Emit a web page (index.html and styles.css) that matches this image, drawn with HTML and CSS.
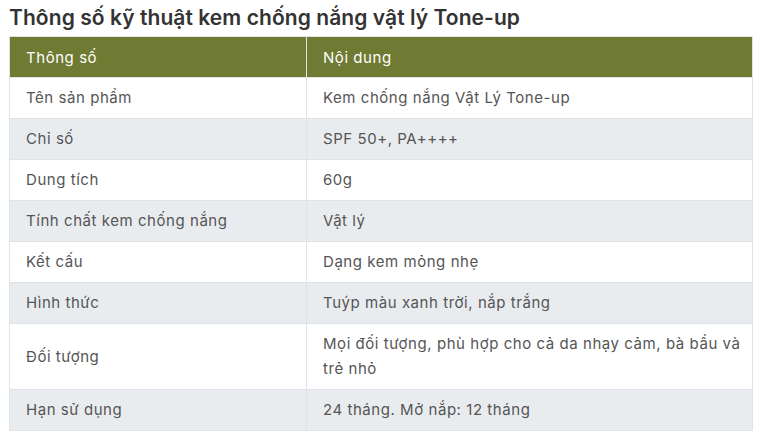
FILE: index.html
```html
<!DOCTYPE html>
<html lang="vi">
<head>
<meta charset="utf-8">
<link rel="stylesheet" href="styles.css">
</head>
<body>
<div class="wrap">
  <h2 class="title">Thông số kỹ thuật kem chống nắng vật lý Tone-up</h2>
  <table class="spec">
    <thead>
      <tr><th class="c1">Thông số</th><th class="c2">Nội dung</th></tr>
    </thead>
    <tbody>
      <tr><td class="c1">Tên sản phẩm</td><td class="c2">Kem chống nắng Vật Lý Tone-up</td></tr>
      <tr class="alt"><td class="c1">Chỉ số</td><td class="c2">SPF 50+, PA++++</td></tr>
      <tr><td class="c1">Dung tích</td><td class="c2">60g</td></tr>
      <tr class="alt"><td class="c1">Tính chất kem chống nắng</td><td class="c2">Vật lý</td></tr>
      <tr><td class="c1">Kết cấu</td><td class="c2">Dạng kem mỏng nhẹ</td></tr>
      <tr class="alt"><td class="c1">Hình thức</td><td class="c2">Tuýp màu xanh trời, nắp trắng</td></tr>
      <tr><td class="c1">Đối tượng</td><td class="c2">Mọi đối tượng, phù hợp cho cả da nhạy cảm, bà bầu và trẻ nhỏ</td></tr>
      <tr class="alt"><td class="c1">Hạn sử dụng</td><td class="c2">24 tháng. Mở nắp: 12 tháng</td></tr>
    </tbody>
  </table>
</div>
</body>
</html>
```
FILE: styles.css
```css
html, body {
  margin: 0;
  padding: 0;
  background: #ffffff;
}
.wrap {
  padding: 5px 7px 0 9px;
  font-family: "Inter", "Open Sans", sans-serif;
}
.title {
  margin: 0 0 5px 0;
  font-size: 21px;
  line-height: 26px;
  font-weight: 600;
  color: #333333;
  letter-spacing: 0.07px;
}
.spec {
  width: 744px;
  border-collapse: collapse;
  font-size: 15px;
  letter-spacing: 0.55px;
  color: #555555;
}
.spec th, .spec td {
  box-sizing: border-box;
  border: 1px solid #dfe2e6;
  padding: 0 16px;
  text-align: left;
  vertical-align: middle;
  line-height: 25px;
}
.spec th {
  background: #6f7a32;
  color: #ffffff;
  font-weight: 400;
  height: 41px;
}
.spec .c1 { width: 297px; }
.spec .c2 { padding-right: 10px; }
.spec tbody td {
  padding-top: 7px;
  padding-bottom: 8px;
  height: 41px;
}
.spec tr.alt td {
  background: #e9ecef;
}
```
